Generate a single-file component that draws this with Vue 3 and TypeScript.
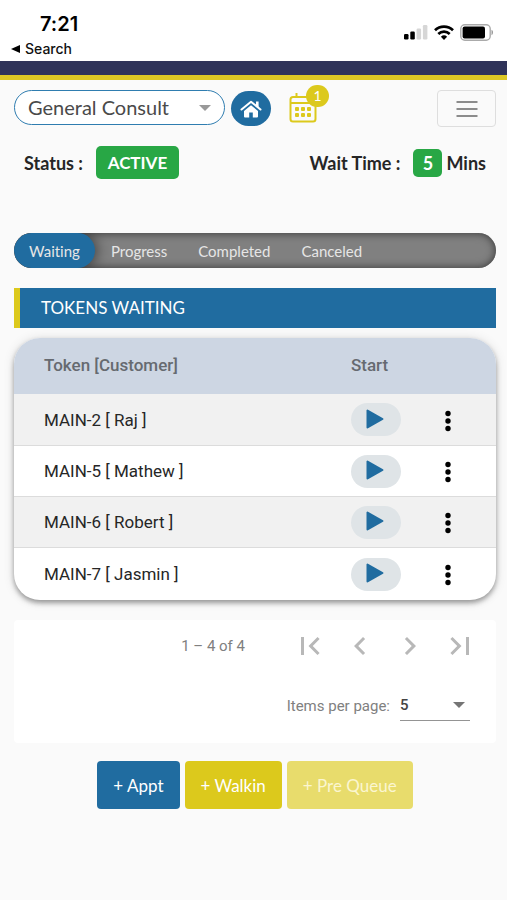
<script setup lang="ts">
import { ref } from 'vue'

interface Token {
  id: string
  customer: string
}

const service = ref('General Consult')
const tabs: string[] = ['Waiting', 'Progress', 'Completed', 'Canceled']
const activeTab = ref('Waiting')
const pageSize = ref(5)

const tokens: Token[] = [
  { id: 'MAIN-2', customer: 'Raj' },
  { id: 'MAIN-5', customer: 'Mathew' },
  { id: 'MAIN-6', customer: 'Robert' },
  { id: 'MAIN-7', customer: 'Jasmin' },
]

const pagers = [
  { label: 'First page', path: 'M18.41 16.59L13.82 12l4.59-4.59L17 6l-6 6 6 6zM6 6h2v12H6z' },
  { label: 'Previous page', path: 'M15.41 7.41L14 6l-6 6 6 6 1.41-1.41L10.83 12z' },
  { label: 'Next page', path: 'M10 6L8.59 7.41 13.17 12l-4.58 4.59L10 18l6-6z' },
  { label: 'Last page', path: 'M5.59 7.41L10.18 12l-4.59 4.59L7 18l6-6-6-6zM16 6h2v12h-2z' },
]
</script>

<template>
  <div class="page">
    <div class="device">
      <div class="device-left">
        <span class="clock">7:21</span>
        <a class="back" href="#">
          <svg width="9" height="8" viewBox="0 0 9 8" aria-hidden="true"><path d="M9 0v8L0 4z" /></svg>
          Search
        </a>
      </div>
      <div class="device-right">
        <svg width="24" height="16" viewBox="0 0 24 16" aria-hidden="true">
          <rect x="0" y="10" width="4.500" height="5.500" rx="1.2" />
          <rect x="6.300" y="7.500" width="4.500" height="8" rx="1.2" />
          <rect x="12.600" y="4.500" width="4.500" height="11" rx="1.2" fill="#d6d6d6" />
          <rect x="18.900" y="1" width="4.500" height="14.500" rx="1.2" fill="#d6d6d6" />
        </svg>
        <svg width="20" height="16" viewBox="0 0 20 16" fill="none" stroke="#000" stroke-width="2.7" aria-hidden="true">
          <path d="M1 6.300a13 13 0 0 1 18 0" />
          <path d="M4.300 9.900a8.300 8.300 0 0 1 11.400 0" />
          <path d="M6.900 12.700a4.500 4.500 0 0 1 6.200 0L10 15.900z" fill="#000" stroke="none" />
        </svg>
        <svg width="34" height="17" viewBox="0 0 34 17" aria-hidden="true">
          <rect x="0.800" y="0.800" width="29.400" height="15.400" rx="4" fill="#fff" stroke="#aaa" stroke-width="1.400" />
          <rect x="2.600" y="2.600" width="22.400" height="11.800" rx="2" />
          <path d="M31.500 5.800c2 .8 2 4.600 0 5.400z" fill="#999" />
        </svg>
      </div>
    </div>
    <div class="brand-bar"></div>

    <main class="content">
      <header class="toolbar">
        <div class="service">
          <select v-model="service" aria-label="Service">
            <option>General Consult</option>
          </select>
          <svg class="caret" width="12" height="6" viewBox="0 0 12 6" aria-hidden="true"><path d="M0 0h12L6 6z" fill="#999" /></svg>
        </div>
        <button class="home" type="button" aria-label="Home">
          <svg width="22" height="18" viewBox="0 0 22 18" aria-hidden="true">
            <path d="M1.500 9.500L11 1.700l9.500 7.800" fill="none" stroke="#fff" stroke-width="2" stroke-linecap="round" stroke-linejoin="round" />
            <path d="M16 1.500h2.600v6L16 5.300z" fill="#fff" />
            <path d="M11 5.200l7 5.700v5.600a1 1 0 0 1-1 1h-4.200v-5H9.200v5H5a1 1 0 0 1-1-1v-5.600z" fill="#fff" />
          </svg>
        </button>
        <button class="calendar" type="button" aria-label="Appointments">
          <svg width="28" height="31" viewBox="0 0 28 31" fill="none" stroke="#dcc91c" stroke-width="2" aria-hidden="true">
            <rect x="1.500" y="5" width="25" height="24.500" rx="2.500" />
            <path d="M1.500 11h25M7.500 1v4M20.500 1v4" />
            <g fill="#dcc91c" stroke="none">
              <rect x="6" y="15" width="4" height="4" rx="1" />
              <rect x="12" y="15" width="4" height="4" rx="1" />
              <rect x="18" y="15" width="4" height="4" rx="1" />
              <rect x="6" y="21" width="4" height="4" rx="1" />
              <rect x="12" y="21" width="4" height="4" rx="1" />
              <rect x="18" y="21" width="4" height="4" rx="1" />
            </g>
          </svg>
          <span class="count">1</span>
        </button>
        <button class="menu" type="button" aria-label="Menu">
          <svg width="22" height="18" viewBox="0 0 22 18" aria-hidden="true">
            <path d="M0.500 2h21M0.500 9h21M0.500 16h21" stroke="#8c8c8c" stroke-width="2" />
          </svg>
        </button>
      </header>

      <section class="summary">
        <span>Status :</span>
        <span class="badge active">ACTIVE</span>
        <span class="wait">Wait Time :</span>
        <span class="badge minutes">5</span>
        <span>Mins</span>
      </section>

      <nav class="tabs">
        <button
          v-for="tab in tabs"
          :key="tab"
          type="button"
          class="tab"
          :class="{ selected: tab === activeTab }"
          @click="activeTab = tab"
        >{{ tab }}</button>
      </nav>

      <h1 class="heading">TOKENS WAITING</h1>

      <div class="card">
        <table>
          <thead>
            <tr>
              <th class="name" scope="col">Token [Customer]</th>
              <th class="start" scope="col">Start</th>
              <th class="more"></th>
            </tr>
          </thead>
          <tbody>
            <tr v-for="token in tokens" :key="token.id">
              <td class="name">{{ token.id }} [ {{ token.customer }} ]</td>
              <td class="start">
                <button class="play" type="button" :aria-label="`Start ${token.id}`">
                  <svg width="18" height="20" viewBox="0 0 18 20" aria-hidden="true">
                    <path d="M1.500 1.500v17L16.500 10z" fill="#206ca0" stroke="#206ca0" stroke-width="2" stroke-linejoin="round" />
                  </svg>
                </button>
              </td>
              <td class="more">
                <button class="dots" type="button" :aria-label="`Options for ${token.id}`">
                  <svg width="6" height="22" viewBox="0 0 6 22" aria-hidden="true">
                    <circle cx="3" cy="3.500" r="2.700" /><circle cx="3" cy="11" r="2.700" /><circle cx="3" cy="18.500" r="2.700" />
                  </svg>
                </button>
              </td>
            </tr>
          </tbody>
        </table>
      </div>

      <section class="paginator">
        <div class="range">
          <span class="range-text">1 – 4 of 4</span>
          <button v-for="pager in pagers" :key="pager.label" class="pager" type="button" :aria-label="pager.label">
            <svg width="36" height="36" viewBox="0 0 24 24" aria-hidden="true"><path :d="pager.path" fill="#b8b8b8" /></svg>
          </button>
        </div>
        <div class="size">
          <label for="page-size">Items per page:</label>
          <div class="size-field">
            <select id="page-size" v-model="pageSize">
              <option :value="5">5</option>
              <option :value="10">10</option>
            </select>
            <svg class="caret" width="12" height="6" viewBox="0 0 12 6" aria-hidden="true"><path d="M0 0h12L6 6z" fill="#757575" /></svg>
          </div>
        </div>
      </section>

      <div class="actions">
        <button type="button" class="action appt">+ Appt</button>
        <button type="button" class="action walkin">+ Walkin</button>
        <button type="button" class="action queue">+ Pre Queue</button>
      </div>
    </main>
  </div>
</template>

<style>
body {
  background: #fafafa;
}
</style>

<style scoped>
.page {
  font-family: Lato, "Liberation Sans", sans-serif;
  font-variant-ligatures: none;
  color: #262626;
}
.page * {
  box-sizing: border-box;
}
button,
select {
  font: inherit;
  font-variant-ligatures: none;
  border: 0;
  margin: 0;
  padding: 0;
  background: none;
  color: inherit;
}
select {
  appearance: none;
  width: 100%;
}
svg {
  display: block;
}
.device {
  display: flex;
  justify-content: space-between;
  height: 61px;
  padding: 12px 13px 0 11px;
  background: #fff;
  color: #000;
  font-family: Inter, sans-serif;
}
.device-left {
  display: flex;
  flex-direction: column;
}
.clock {
  padding-left: 29px;
  font-size: 20px;
  line-height: 24px;
  font-weight: 600;
}
.back {
  display: flex;
  align-items: center;
  gap: 5px;
  font-size: 14px;
  line-height: 25px;
  font-weight: 500;
  color: #111;
  text-decoration: none;
}
.device-right {
  display: flex;
  align-items: center;
  gap: 6px;
  height: 40px;
}
.brand-bar {
  height: 19px;
  background: #2f3359;
  border-bottom: 5px solid #dcc724;
}
.content {
  padding: 10px 11px 24px 14px;
}
.toolbar {
  display: flex;
  align-items: flex-start;
  height: 37px;
}
.service {
  display: flex;
  align-items: center;
  width: 211px;
  height: 35px;
  padding: 0 13px;
  border: 1px solid #2f7db0;
  border-radius: 18px;
  background: #fff;
}
.service select {
  height: 33px;
  padding-bottom: 2px;
  font-size: 20px;
  line-height: 28px;
  color: #4a4a4a;
}
.caret {
  flex: none;
  pointer-events: none;
}
.home {
  display: grid;
  place-items: center;
  width: 40px;
  height: 35px;
  margin: 1px 0 0 6px;
  border-radius: 18px;
  background: #206ca0;
}
.calendar {
  position: relative;
  margin: 2px 0 0 18px;
}
.count {
  position: absolute;
  top: -7px;
  left: 17px;
  width: 23px;
  border-radius: 12px;
  background: #dcc91c;
  color: #fff;
  font-size: 14px;
  line-height: 22px;
  text-align: center;
}
.menu {
  display: grid;
  place-items: center;
  width: 59px;
  height: 37px;
  margin-left: auto;
  border: 1px solid #dedede;
  border-radius: 4px;
}
.summary {
  display: flex;
  align-items: center;
  height: 33px;
  margin-top: 19px;
  padding: 0 10px;
  font-size: 18px;
  font-weight: 700;
}
.badge {
  border-radius: 5px;
  background: #28a745;
  color: #fff;
  text-align: center;
}
.active {
  width: 83px;
  margin-left: 13px;
  font-size: 17px;
  line-height: 33px;
}
.wait {
  margin-left: auto;
}
.minutes {
  width: 29px;
  margin: 0 4px 0 13px;
  line-height: 28px;
}
.tabs {
  display: flex;
  gap: 1px;
  height: 35px;
  margin-top: 54px;
  overflow: hidden;
  border-radius: 18px;
  background: #808080;
  box-shadow: inset 0 0 8px #333;
}
.tab {
  padding: 0 15px;
  border-radius: 18px;
  color: #e6e6e6;
  font-size: 15px;
}
.selected {
  background: #206ca0;
  box-shadow: 2px 0 14px rgba(0, 0, 0, 0.5);
}
.heading {
  margin: 20px 0 0;
  padding-left: 21px;
  border-left: 6px solid #dcc91c;
  background: #206ca0;
  color: #fff;
  font-size: 17px;
  line-height: 40px;
  font-weight: 400;
}
.card {
  margin-top: 10px;
  overflow: hidden;
  border-radius: 26px;
  background: #fff;
  box-shadow: 0 3px 5px rgba(0, 0, 0, 0.35), 0 1px 12px rgba(0, 0, 0, 0.12);
  font-family: Roboto, sans-serif;
}
table {
  width: 100%;
  border-collapse: separate;
  border-spacing: 0;
  table-layout: fixed;
}
th,
td {
  padding: 0;
  text-align: left;
}
th {
  height: 56px;
  padding-bottom: 2px;
  background: #cdd6e3;
  color: #666a70;
  font-size: 17px;
  font-weight: 500;
}
td {
  height: 51px;
  border-bottom: 1px solid #dcdcdc;
  font-size: 17px;
}
tbody tr:nth-child(odd) {
  background: #f1f1f1;
}
tbody tr:first-child td {
  height: 52px;
}
tbody tr:last-child td {
  height: 52px;
  border-bottom: 0;
}
.name {
  padding-left: 30px;
}
.start {
  width: 94px;
}
.more {
  width: 51px;
}
.play {
  display: flex;
  align-items: center;
  width: 50px;
  height: 33px;
  padding: 0 0 2px 15px;
  border-radius: 17px;
  background: #dfe4e7;
}
.dots {
  display: block;
  padding-top: 2px;
}
.paginator {
  margin-top: 20px;
  padding: 8px 18px 22px;
  border-radius: 4px;
  background: #fff;
  color: #808080;
  font-family: Roboto, sans-serif;
  font-size: 15px;
}
.range {
  display: flex;
  align-items: center;
  justify-content: flex-end;
  gap: 14px;
}
.range-text {
  margin-right: 33px;
}
.size {
  display: flex;
  align-items: center;
  justify-content: flex-end;
  gap: 10px;
  margin: 26px 8px 0 0;
}
.size-field {
  display: flex;
  align-items: center;
  width: 70px;
  height: 31px;
  padding-right: 5px;
  border-bottom: 1px solid #949494;
  color: #444;
  font-weight: 500;
}
.actions {
  display: flex;
  justify-content: center;
  gap: 5px;
  margin-top: 18px;
}
.action {
  height: 48px;
  padding: 0 16px;
  border-radius: 4px;
  color: #fff;
  font-size: 17px;
}
.appt {
  background: #206ca0;
}
.walkin {
  background: #dcc91c;
}
.queue {
  background: #e8dc6c;
  color: #fbf6d0;
}
</style>
